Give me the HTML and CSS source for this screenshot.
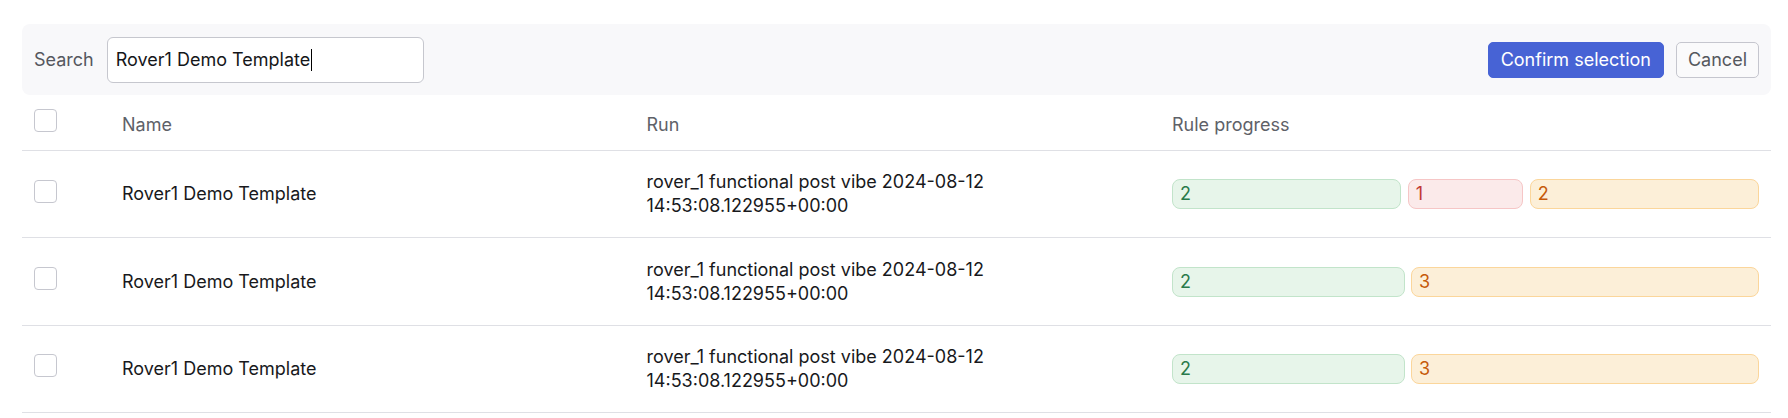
FILE: index.html
```html
<!DOCTYPE html>
<html lang="en">
<head>
<meta charset="utf-8">
<title>Select template</title>
<link rel="stylesheet" href="styles.css">
</head>
<body>
<div class="page">
  <div class="toolbar">
    <div class="search-group">
      <span class="search-label">Search</span>
      <div class="search-field"><span class="search-text">Rover1 Demo Template</span><span class="caret"></span></div>
    </div>
    <div class="actions">
      <button class="btn btn-primary">Confirm selection</button>
      <button class="btn btn-secondary">Cancel</button>
    </div>
  </div>

  <div class="table">
    <div class="row head">
      <div class="cell cell-check"><span class="checkbox"></span></div>
      <div class="cell">Name</div>
      <div class="cell">Run</div>
      <div class="cell">Rule progress</div>
    </div>

    <div class="row">
      <div class="cell cell-check"><span class="checkbox"></span></div>
      <div class="cell">Rover1 Demo Template</div>
      <div class="cell run">rover_1 functional post vibe 2024-08-12<br>14:53:08.122955+00:00</div>
      <div class="cell">
        <div class="progress">
          <span class="badge ok" style="flex-grow:2">2</span>
          <span class="badge fail" style="flex-grow:1">1</span>
          <span class="badge warn" style="flex-grow:2">2</span>
        </div>
      </div>
    </div>

    <div class="row">
      <div class="cell cell-check"><span class="checkbox"></span></div>
      <div class="cell">Rover1 Demo Template</div>
      <div class="cell run">rover_1 functional post vibe 2024-08-12<br>14:53:08.122955+00:00</div>
      <div class="cell">
        <div class="progress">
          <span class="badge ok" style="flex-grow:2">2</span>
          <span class="badge warn" style="flex-grow:3">3</span>
        </div>
      </div>
    </div>

    <div class="row">
      <div class="cell cell-check"><span class="checkbox"></span></div>
      <div class="cell">Rover1 Demo Template</div>
      <div class="cell run">rover_1 functional post vibe 2024-08-12<br>14:53:08.122955+00:00</div>
      <div class="cell">
        <div class="progress">
          <span class="badge ok" style="flex-grow:2">2</span>
          <span class="badge warn" style="flex-grow:3">3</span>
        </div>
      </div>
    </div>
  </div>
</div>
</body>
</html>
```
FILE: styles.css
```css
* { box-sizing: border-box; }

html, body {
  margin: 0;
  background: #ffffff;
}

body {
  font-family: Inter, "Liberation Sans", sans-serif;
  font-size: 18px;
  line-height: 24px;
  color: #18191c;
}

.page {
  padding: 24px 17px 0 22px;
}

.toolbar {
  display: flex;
  align-items: center;
  justify-content: space-between;
  height: 71px;
  padding: 0 12px;
  background: #f8f8fa;
  border-radius: 8px;
}

.search-group {
  display: flex;
  align-items: center;
  gap: 13px;
}

.search-label {
  color: #55575e;
}

.search-field {
  display: flex;
  align-items: center;
  width: 317px;
  height: 46px;
  padding: 0 8px;
  background: #ffffff;
  border: 1px solid #c6c7ce;
  border-radius: 6px;
  color: #151619;
}

.caret {
  display: inline-block;
  width: 1px;
  height: 22px;
  background: #000000;
  margin-left: 1px;
}

.actions {
  display: flex;
  align-items: center;
  gap: 12px;
}

.btn {
  height: 36px;
  padding: 0 12px;
  font-family: inherit;
  font-size: 18px;
  line-height: 24px;
  border-radius: 5px;
  cursor: pointer;
}

.btn-primary {
  background: #4763d5;
  border: 1px solid #4763d5;
  color: #ffffff;
}

.btn-secondary {
  background: #fafafb;
  border: 1px solid #c5c6ce;
  color: #55585e;
  padding: 0 11px;
}

.row {
  display: grid;
  grid-template-columns: 88px 524.5px 525.5px 1fr;
  align-items: center;
  min-height: 87.4px;
  border-bottom: 1px solid #dfe0e5;
}

.row.head {
  min-height: 56px;
  color: #5e6168;
}

.cell {
  padding: 0 12px;
}

.row.head .cell {
  padding-top: 5px;
}

.row.head .cell-check {
  padding-top: 0;
  padding-bottom: 4px;
}

.cell-check {
  display: flex;
  align-items: center;
  padding-bottom: 6px;
}

.checkbox {
  display: block;
  width: 23px;
  height: 23px;
  background: #ffffff;
  border: 1px solid #c6c7cf;
  border-radius: 4px;
}

.progress {
  display: flex;
  gap: 6.5px;
}

.badge {
  flex-basis: 0;
  flex-shrink: 1;
  height: 30px;
  padding: 0;
  text-indent: 7px;
  line-height: 28px;
  border: 1px solid;
  border-radius: 8px;
}

.badge.ok {
  background: #e7f5ea;
  border-color: #c2e4ca;
  color: #2a7a4b;
}

.badge.fail {
  background: #fbeaea;
  border-color: #f6c6c6;
  color: #c23a33;
}

.badge.warn {
  background: #fcefd8;
  border-color: #fbd69b;
  color: #c65a0a;
}
```
